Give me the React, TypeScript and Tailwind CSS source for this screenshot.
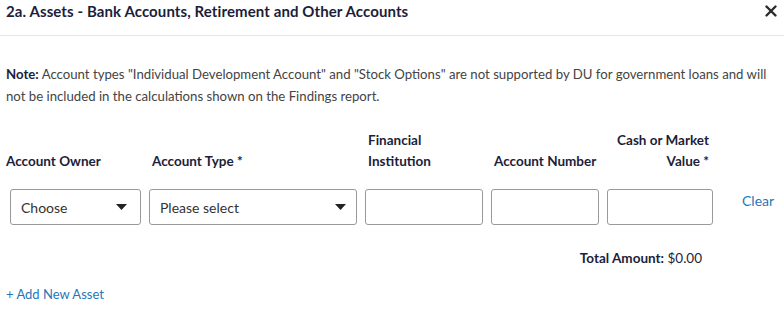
import { X } from 'lucide-react';

function Caret() {
  return (
    <svg width="11" height="6" viewBox="0 0 11 6" className="shrink-0">
      <path d="M0 0 H11 L5.5 6 Z" fill="#222" />
    </svg>
  );
}

export default function App() {
  return (
    <div className="w-[784px] h-[309px] bg-white overflow-hidden font-['Lato',sans-serif] text-[#1c1e3a]">
      {/* Header */}
      <div className="h-[36px] flex items-start justify-between border-b border-[#e6e6e6] pl-[6px] pr-[4px]">
        <h2 className="text-[15px] font-bold leading-[22px] tracking-[0.1px]">2a. Assets - Bank Accounts, Retirement and Other Accounts</h2>
        <button className="mt-[2px] text-[#2b2b2b]">
          <X size={18} strokeWidth={3.2} />
        </button>
      </div>

      {/* Note */}
      <p className="px-[6px] pt-[27px] text-[13.2px] leading-[22px] text-[#444] whitespace-nowrap">
        <span className="font-bold text-[#1c1e3a]">Note:</span> Account types "Individual Development Account" and "Stock Options" are not supported by DU for government loans and will
        <br />
        not be included in the calculations shown on the Findings report.
      </p>

      {/* Asset row */}
      <div className="flex gap-[8px] pl-[10px] mt-[24px]">
        <div className="w-[131px] flex flex-col">
          <div className="h-[44px] pb-[3px] flex items-end -ml-[4px] text-[13.5px] font-bold leading-[21px] whitespace-nowrap">Account Owner</div>
          <div className="mt-[14px] h-[36px] border border-[#999] rounded-[3px] flex items-center justify-between pl-[10px] pr-[13px] text-[14px] text-[#333]">
            <span>Choose</span>
            <Caret />
          </div>
        </div>
        <div className="w-[208px] flex flex-col">
          <div className="h-[44px] pb-[3px] flex items-end pl-[3px] text-[13.5px] font-bold leading-[21px] whitespace-nowrap">Account Type *</div>
          <div className="mt-[14px] h-[36px] border border-[#999] rounded-[3px] flex items-center justify-between pl-[10px] pr-[10px] text-[14px] text-[#333]">
            <span>Please select</span>
            <Caret />
          </div>
        </div>
        <div className="w-[118px] flex flex-col">
          <div className="h-[44px] pb-[3px] flex items-end pl-[3px] text-[13.5px] font-bold leading-[21px]">Financial<br />Institution</div>
          <div className="mt-[14px] h-[36px] border border-[#999] rounded-[3px]" />
        </div>
        <div className="w-[108px] flex flex-col">
          <div className="h-[44px] pb-[3px] flex items-end pl-[3px] text-[13.5px] font-bold leading-[21px] whitespace-nowrap">Account Number</div>
          <div className="mt-[14px] h-[36px] border border-[#999] rounded-[3px]" />
        </div>
        <div className="w-[106px] flex flex-col">
          <div className="h-[44px] pb-[3px] flex items-end justify-end text-right pr-[4px] text-[13.5px] font-bold leading-[21px] whitespace-nowrap">Cash or Market<br />Value *</div>
          <div className="mt-[14px] h-[36px] border border-[#999] rounded-[3px]" />
        </div>
        <div className="flex flex-col pl-[21px]">
          <div className="h-[44px]" />
          <button className="mt-[14px] h-[24px] text-[14px] text-[#1f77b8] leading-[24px]">Clear</button>
        </div>
      </div>

      {/* Total */}
      <div className="w-[702px] mt-[23px] text-right text-[13.5px] leading-[20px]">
        <span className="font-bold">Total Amount:</span> $0.00
      </div>

      {/* Add */}
      <div className="pl-[6px] mt-[13px]">
        <button className="text-[13px] leading-[20px] text-[#1f77b8]">+ Add New Asset</button>
      </div>
    </div>
  );
}
